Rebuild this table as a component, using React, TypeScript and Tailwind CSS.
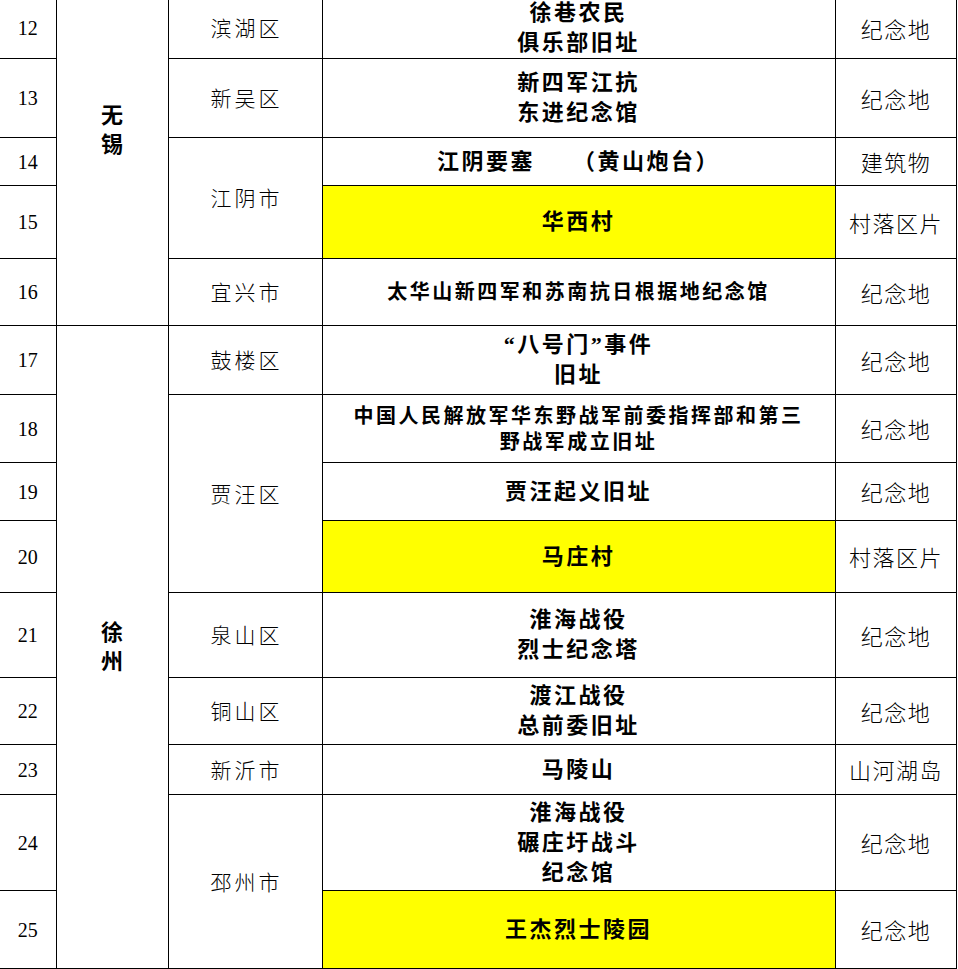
type Row = {
  no: number;
  district?: { name: string; span: number };
  city?: { name: string[]; span: number; shift?: boolean };
  site: string[];
  small?: boolean;
  yellow?: boolean;
  kind: string;
  h: number;
};

const rows: Row[] = [
  { no: 12, city: { name: ["无", "锡"], span: 5, shift: true }, district: { name: "滨湖区", span: 1 }, site: ["徐巷农民", "俱乐部旧址"], kind: "纪念地", h: 60 },
  { no: 13, district: { name: "新吴区", span: 1 }, site: ["新四军江抗", "东进纪念馆"], kind: "纪念地", h: 79 },
  { no: 14, district: { name: "江阴市", span: 2 }, site: ["江阴要塞　　（黄山炮台）"], kind: "建筑物", h: 48 },
  { no: 15, site: ["华西村"], yellow: true, kind: "村落区片", h: 73 },
  { no: 16, district: { name: "宜兴市", span: 1 }, site: ["太华山新四军和苏南抗日根据地纪念馆"], small: true, kind: "纪念地", h: 67 },
  { no: 17, city: { name: ["徐", "州"], span: 9 }, district: { name: "鼓楼区", span: 1 }, site: ["“八号门”事件", "旧址"], kind: "纪念地", h: 69 },
  { no: 18, district: { name: "贾汪区", span: 3 }, site: ["中国人民解放军华东野战军前委指挥部和第三", "野战军成立旧址"], small: true, kind: "纪念地", h: 68 },
  { no: 19, site: ["贾汪起义旧址"], kind: "纪念地", h: 58 },
  { no: 20, site: ["马庄村"], yellow: true, kind: "村落区片", h: 72 },
  { no: 21, district: { name: "泉山区", span: 1 }, site: ["淮海战役", "烈士纪念塔"], kind: "纪念地", h: 85 },
  { no: 22, district: { name: "铜山区", span: 1 }, site: ["渡江战役", "总前委旧址"], kind: "纪念地", h: 67 },
  { no: 23, district: { name: "新沂市", span: 1 }, site: ["马陵山"], kind: "山河湖岛", h: 50 },
  { no: 24, district: { name: "邳州市", span: 2 }, site: ["淮海战役", "碾庄圩战斗", "纪念馆"], kind: "纪念地", h: 96 },
  { no: 25, site: ["王杰烈士陵园"], yellow: true, kind: "纪念地", h: 78 },
];

const cjk = "font-['Liberation_Serif','Noto_Sans_CJK_SC',serif]";

export default function App() {
  return (
    <div className="w-[958px] h-[969px] overflow-hidden bg-white text-black">
      <table className="border-collapse table-fixed w-[956px] -mt-[2px]">
        <colgroup>
          <col className="w-[56px]" />
          <col className="w-[112px]" />
          <col className="w-[154px]" />
          <col className="w-[513px]" />
          <col className="w-[121px]" />
        </colgroup>
        <tbody>
          {rows.map((r, i) => (
            <tr key={r.no} style={{ height: r.h }}>
              <td
                className={`border border-black border-l-0 ${i === 0 ? "border-t-0" : ""} text-center align-middle font-['Liberation_Serif',serif] text-[20px] leading-none`}
              >
                {r.no}
              </td>
              {r.city && (
                <td
                  rowSpan={r.city.span}
                  className={`border border-black ${i === 0 ? "border-t-0" : ""} text-center align-middle font-bold text-[22px] leading-[29px] ${cjk} ${r.city.shift ? "pb-[63px]" : ""}`}
                >
                  {r.city.name.map((c) => (
                    <div key={c}>{c}</div>
                  ))}
                </td>
              )}
              {r.district && (
                <td
                  rowSpan={r.district.span}
                  className={`border border-black ${i === 0 ? "border-t-0" : ""} text-center align-middle font-light text-[21px] tracking-[3px] pl-[3px] font-['Noto_Sans_CJK_SC',sans-serif]`}
                >
                  {r.district.name}
                </td>
              )}
              <td
                className={`border border-black ${i === 0 ? "border-t-0" : ""} ${r.yellow ? "bg-[#ffff00]" : ""} text-center align-middle font-bold ${cjk} ${
                  r.small ? "text-[20px] tracking-[2.5px] leading-[26px]" : "text-[22px] tracking-[2.5px] leading-[30px]"
                }`}
              >
                {r.site.map((s) => (
                  <div key={s}>{s}</div>
                ))}
              </td>
              <td
                className={`border border-black ${i === 0 ? "border-t-0" : ""} text-center align-middle font-light text-[22px] tracking-[1.5px] pl-[1px] font-['Noto_Sans_CJK_SC',sans-serif]`}
              >
                {r.kind}
              </td>
            </tr>
          ))}
        </tbody>
      </table>
    </div>
  );
}
